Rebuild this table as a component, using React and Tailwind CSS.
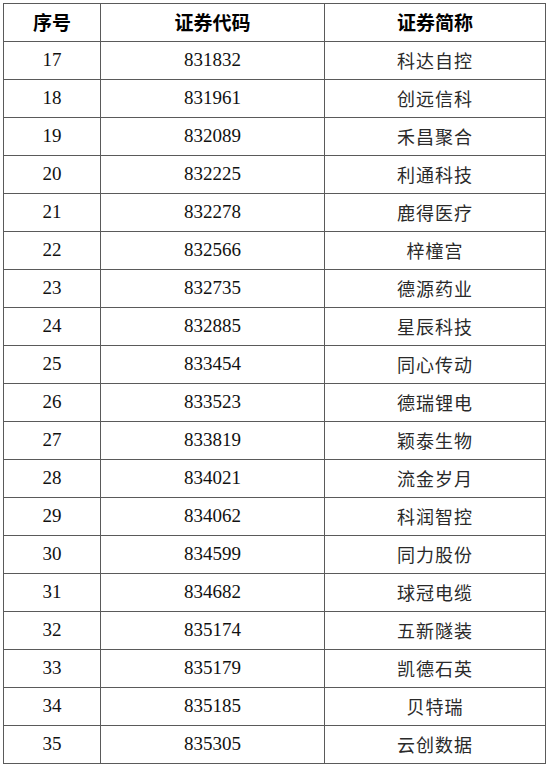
const rows = [
  ['17', '831832', '科达自控'],
  ['18', '831961', '创远信科'],
  ['19', '832089', '禾昌聚合'],
  ['20', '832225', '利通科技'],
  ['21', '832278', '鹿得医疗'],
  ['22', '832566', '梓橦宫'],
  ['23', '832735', '德源药业'],
  ['24', '832885', '星辰科技'],
  ['25', '833454', '同心传动'],
  ['26', '833523', '德瑞锂电'],
  ['27', '833819', '颖泰生物'],
  ['28', '834021', '流金岁月'],
  ['29', '834062', '科润智控'],
  ['30', '834599', '同力股份'],
  ['31', '834682', '球冠电缆'],
  ['32', '835174', '五新隧装'],
  ['33', '835179', '凯德石英'],
  ['34', '835185', '贝特瑞'],
  ['35', '835305', '云创数据'],
]

const num = "font-['Liberation_Serif','Times_New_Roman',serif] text-[19px] text-[#111]"
const cjk = "font-['Noto_Sans_CJK_SC','Noto_Sans',sans-serif] text-[18px] tracking-[1px] text-[#2a2a2a]"

export default function App() {
  return (
    <div className="h-[771px] w-[550px] bg-white pl-[3px] pt-[3px]">
      <table className="w-[542px] table-fixed border-collapse">
        <colgroup>
          <col className="w-[97px]" />
          <col className="w-[224px]" />
          <col className="w-[221px]" />
        </colgroup>
        <thead>
          <tr className="h-[38px]">
            {['序号', '证券代码', '证券简称'].map((h) => (
              <th
                key={h}
                className="border border-[#5a5a5a] p-0 text-center align-middle font-['Noto_Sans_CJK_SC',sans-serif] text-[19px] font-bold text-black"
              >
                {h}
              </th>
            ))}
          </tr>
        </thead>
        <tbody>
          {rows.map(([no, code, name]) => (
            <tr key={no} className="h-[38px]">
              <td className={`border border-[#5a5a5a] p-0 text-center align-middle ${num}`}>{no}</td>
              <td className={`border border-[#5a5a5a] p-0 text-center align-middle ${num}`}>{code}</td>
              <td className={`border border-[#5a5a5a] p-0 text-center align-middle ${cjk}`}>{name}</td>
            </tr>
          ))}
        </tbody>
      </table>
    </div>
  )
}
